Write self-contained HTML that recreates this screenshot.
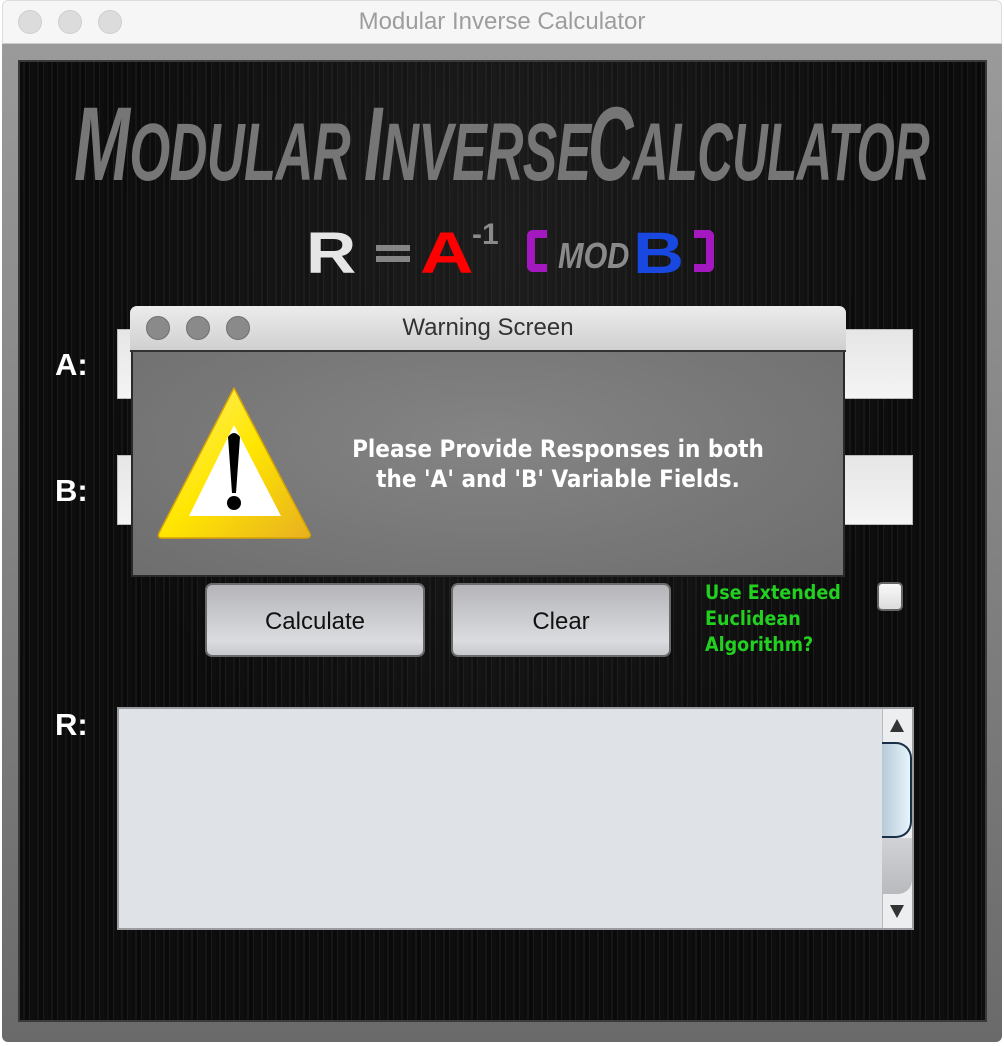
<!DOCTYPE html>
<html><head><meta charset="utf-8"><style>
*{margin:0;padding:0;box-sizing:border-box}
body{width:1004px;height:1046px;background:#fff;position:relative;overflow:hidden;font-family:"Liberation Sans",sans-serif}
.abs{position:absolute}
.title{left:2px;top:0;width:1000px;height:44px;background:#f6f6f6;border-radius:6px 6px 0 0;border:1px solid #ddd;border-bottom:1px solid #ccc}
.dot{width:24px;height:24px;border-radius:50%;background:#dcdcdc;border:1px solid #cfcfcf;top:10px}
.frame{left:2px;top:44px;width:1000px;height:998px;background:linear-gradient(#9a9a9a,#6a6a6a);border-radius:0 0 6px 6px}
.panel{left:18px;top:60px;width:969px;height:962px;background:radial-gradient(ellipse at 50% 20%,rgba(60,60,60,.35),rgba(0,0,0,0) 60%),repeating-linear-gradient(90deg,#0c0c0c 0 3px,#161616 3px 5px,#0a0a0a 5px 9px,#1b1b1b 9px 10px,#0e0e0e 10px 14px);border:2px solid #3a3a3a}
.lbl{color:#fff;font-weight:bold;font-size:31px;left:55px}
.field{background:linear-gradient(#e6e6e6,#f4f4f4);left:117px;width:796px;height:70px;border:1px solid #bbb}
.btn{top:583px;width:220px;height:74px;border-radius:7px;background:linear-gradient(#b5b5b9,#dadcdf 80%,#c8c9cc);border:2px solid #6a6a6a;font-size:24px;color:#111;text-align:center;line-height:74px}
.w{position:absolute;top:90px;font-family:'Liberation Sans Narrow','Liberation Sans',sans-serif;font-style:italic;font-weight:bold;color:#767676;line-height:110px;white-space:nowrap;transform-origin:left top;font-size:82px;letter-spacing:-1px}
.w b{font-size:105px}
.f{position:absolute;font-weight:bold;line-height:1;white-space:nowrap;transform-origin:left top}
</style></head><body>
<div class="abs title"></div>
<div class="abs dot" style="left:18px"></div>
<div class="abs dot" style="left:58px"></div>
<div class="abs dot" style="left:98px"></div>
<div class="abs" style="left:0;width:1004px;top:8px;text-align:center;font-size:24px;color:#9d9d9d">Modular Inverse Calculator</div>
<div class="abs frame"></div>
<div class="abs panel"></div>
<div class="w" style="left:74px;transform:scaleX(.64)"><b>M</b>ODULAR</div>
<div class="w" style="left:364px;transform:scaleX(.63)"><b>I</b>NVERSE</div>
<div class="w" style="left:588px;transform:scaleX(.60)"><b>C</b>ALCULATOR</div>

<div class="f" style="left:306px;top:225px;font-size:58px;color:#e6e6e6;transform:scaleX(1.2)">R</div>
<div class="abs" style="left:376px;top:245px;width:34px;height:6px;background:#858585"></div>
<div class="abs" style="left:376px;top:256px;width:34px;height:6px;background:#858585"></div>
<div class="f" style="left:420px;top:225px;font-size:58px;color:#f00;transform:scaleX(1.28)">A</div>
<div class="f" style="left:472px;top:220px;font-size:30px;color:#8a8a8a">-1</div>
<div class="abs" style="left:527px;top:230px;width:20px;height:42px;border:8px solid #a418c0;border-right:none;border-radius:6px 0 0 6px"></div>
<div class="f" style="left:558px;top:238px;font-size:36px;color:#8a8a8a;font-style:italic;transform:scaleX(.85);font-family:'Liberation Sans Narrow','Liberation Sans',sans-serif">MOD</div>
<div class="f" style="left:633px;top:225px;font-size:58px;color:#1848e0;transform:scaleX(1.22)">B</div>
<div class="abs" style="left:694px;top:230px;width:20px;height:42px;border:8px solid #a418c0;border-left:none;border-radius:0 6px 6px 0"></div>

<div class="abs lbl" style="top:347px">A:</div>
<div class="abs lbl" style="top:473px">B:</div>
<div class="abs lbl" style="top:707px">R:</div>
<div class="abs field" style="top:329px"></div>
<div class="abs field" style="top:455px"></div>
<!-- dialog -->
<div class="abs" style="left:130px;top:306px;width:716px;height:46px;border-radius:7px 7px 0 0;background:linear-gradient(#ececec,#d0d0d0);border-bottom:2px solid #333"></div>
<div class="abs dot" style="left:146px;top:316px;width:24px;height:24px;background:#8a8a8a;border-color:#6f6f6f"></div>
<div class="abs dot" style="left:186px;top:316px;width:24px;height:24px;background:#8a8a8a;border-color:#6f6f6f"></div>
<div class="abs dot" style="left:226px;top:316px;width:24px;height:24px;background:#8a8a8a;border-color:#6f6f6f"></div>
<div class="abs" style="left:130px;width:716px;top:314px;text-align:center;font-size:24px;color:#333">Warning Screen</div>
<div class="abs" style="left:131px;top:352px;width:714px;height:225px;background:radial-gradient(ellipse at 50% 40%,#848484,#6e6e6e);border:2px solid #2a2a2a;border-top:none"></div>
<svg class="abs" style="left:150px;top:380px" width="170" height="165" viewBox="150 380 170 165">
<defs><linearGradient id="y" x1="0" y1="0" x2="1" y2="1"><stop offset="0" stop-color="#fff176"/><stop offset=".5" stop-color="#ffe600"/><stop offset="1" stop-color="#e8b020"/></linearGradient></defs>
<path d="M234 388 L310 534 Q311 538 306 538 L162 538 Q157 538 159 533 Z" fill="url(#y)" stroke="#d9a400" stroke-width="1.5" stroke-linejoin="round"/>
<path d="M234 425 L281 516 L189 516 Z" fill="#fff"/>
<path d="M228 437 Q234 429 240 437 L236 493 L232 493 Z" fill="#000"/>
<circle cx="234" cy="503" r="7" fill="#000"/>
</svg>
<div class="abs" style="left:300px;width:516px;top:434px;text-align:center;color:#fff;font-weight:bold;font-size:24px;line-height:30px;font-family:'DejaVu Sans Condensed','Liberation Sans',sans-serif">Please Provide Responses in both<br>the 'A' and 'B' Variable Fields.</div>
<div class="abs btn" style="left:205px">Calculate</div>
<div class="abs btn" style="left:451px">Clear</div>
<div class="abs" style="left:705px;top:580px;color:#22d020;font-weight:bold;font-size:19.5px;line-height:26px;font-family:'DejaVu Sans Condensed','Liberation Sans',sans-serif">Use Extended<br>Euclidean<br>Algorithm?</div>
<div class="abs" style="left:877px;top:582px;width:26px;height:29px;border-radius:5px;background:linear-gradient(#fafafa,#dcdcdc);border:2px solid #666"></div>
<div class="abs" style="left:117px;top:707px;width:797px;height:223px;background:#dfe2e6;border:2px solid #9a9ca0"></div>
<div class="abs" style="left:882px;top:709px;width:30px;height:219px;background:#eceef0;border-left:1px solid #bbb"></div>
<div class="abs" style="left:882px;top:742px;width:30px;height:96px;background:linear-gradient(90deg,#b8cad8,#e6f4fb);border:2px solid #1a3048;border-left:none;border-radius:0 16px 16px 0"></div>
<div class="abs" style="left:882px;top:838px;width:30px;height:56px;background:linear-gradient(#d0d2d6,#b8babe);border-radius:0 0 14px 0"></div>
<svg class="abs" style="left:882px;top:712px" width="30" height="215"><path d="M15 7 L22 20 L8 20Z" fill="#333"/><path d="M8 193 L22 193 L15 206Z" fill="#333"/></svg>
</body></html>
